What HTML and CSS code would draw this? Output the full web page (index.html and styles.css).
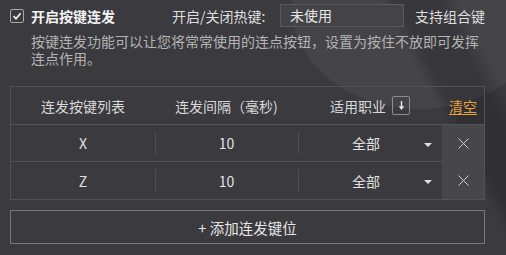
FILE: index.html
```html
<!DOCTYPE html>
<html lang="zh">
<head>
<meta charset="utf-8">
<link rel="stylesheet" href="styles.css">
</head>
<body>
<div class="page">
  <div class="toprow">
    <span class="check"><svg width="10" height="10" viewBox="0 0 10 10"><path d="M1.5 5.2 L4 7.6 L8.6 2.4" fill="none" stroke="#e6e6e6" stroke-width="1.8"/></svg></span>
    <span class="title">开启按键连发</span>
    <span class="hk-label">开启/关闭热键:</span>
    <span class="hk-input">未使用</span>
    <span class="combo">支持组合键</span>
  </div>
  <p class="desc">按键连发功能可以让您将常常使用的连点按钮，设置为按住不放即可发挥连点作用。</p>
  <div class="table">
    <div class="row head">
      <div class="cell">连发按键列表</div>
      <div class="cell">连发间隔（毫秒)</div>
      <div class="cell">适用职业<span class="sort"><svg width="7" height="11" viewBox="0 0 7 11"><path d="M3.5 1 V9" stroke="#e8e8e8" stroke-width="1.4"/><path d="M0.8 6.2 L3.5 10 L6.2 6.2 Z" fill="#e8e8e8"/></svg></span></div>
      <div class="cell act"><span class="clear">清空</span></div>
    </div>
    <div class="row">
      <div class="cell"><span class="val">X</span></div>
      <div class="cell div"><span class="val">10</span></div>
      <div class="cell div sel"><span class="val">全部</span><span class="caret"></span></div>
      <div class="cell del"><svg width="11" height="11" viewBox="0 0 11 11"><path d="M0.5 0.5 L10.5 10.5 M10.5 0.5 L0.5 10.5" stroke="#cfcfcf" stroke-width="1"/></svg></div>
    </div>
    <div class="row last">
      <div class="cell"><span class="val">Z</span></div>
      <div class="cell div"><span class="val">10</span></div>
      <div class="cell div sel"><span class="val">全部</span><span class="caret"></span></div>
      <div class="cell del"><svg width="11" height="11" viewBox="0 0 11 11"><path d="M0.5 0.5 L10.5 10.5 M10.5 0.5 L0.5 10.5" stroke="#cfcfcf" stroke-width="1"/></svg></div>
    </div>
  </div>
  <div class="addbtn">+ 添加连发键位</div>
</div>
</body>
</html>
```
FILE: styles.css
```css
html, body {
  margin: 0;
  padding: 0;
}
body {
  width: 506px;
  height: 255px;
  overflow: hidden;
  background-color: #3b3a3f;
  background-image:
    linear-gradient(62deg, transparent 0, transparent 455px, rgba(20,20,24,0.28) 470px, rgba(20,20,24,0.28) 505px, transparent 525px),
    radial-gradient(ellipse 130px 105px at 420px 5px, rgba(255,255,255,0.05) 0, rgba(255,255,255,0.05) 98%, transparent 100%);
  font-family: "Noto Sans CJK SC", "Microsoft YaHei", "Noto Sans", sans-serif;
  font-size: 14px;
  color: #dcdcdc;
}
.page {
  padding: 4px 21px 0 10px;
}
.toprow {
  display: flex;
  align-items: center;
  height: 23px;
}
.check {
  width: 12px;
  height: 12px;
  border: 1px solid #a8a8a8;
  border-radius: 2px;
  display: flex;
  align-items: center;
  justify-content: center;
  margin-right: 7px;
}
.title {
  font-weight: bold;
  color: #f2f2f2;
  width: 141px;
}
.hk-label {
  color: #dedede;
  width: 108px;
}
.hk-input {
  box-sizing: border-box;
  width: 124px;
  height: 23px;
  background: #444348;
  border: 1px solid #5a595e;
  padding-left: 9px;
  line-height: 21px;
  color: #e6e6e6;
}
.combo {
  margin-left: 11px;
  color: #dedede;
}
.desc {
  margin: 6px 0 0 21px;
  width: 452px;
  line-height: 17px;
  color: #b4b4b4;
}
.table {
  margin-top: 19px;
  width: 475px;
  box-sizing: border-box;
  border: 1px solid #535257;
}
.row {
  display: grid;
  grid-template-columns: 144px 143px 144px 42px;
  height: 37px;
}
.row.head {
  height: 37px;
  border-bottom: 1px solid #535257;
}
.row .cell {
  display: flex;
  align-items: center;
  justify-content: center;
  position: relative;
  color: #e2e2e2;
}
.row:not(.head):not(.last) .cell:not(.del) {
  border-bottom: 1px solid #535257;
}
.head .cell {
  color: #d8d8d8;
}
.sort {
  box-sizing: border-box;
  width: 18px;
  height: 19px;
  border: 1px solid #8e8d92;
  border-radius: 2px;
  margin-left: 6px;
  display: flex;
  align-items: center;
  justify-content: center;
}
.clear {
  color: #e9a23b;
  text-decoration: underline;
  text-underline-offset: 2px;
}
.div::before {
  content: "";
  position: absolute;
  left: 0;
  top: 7px;
  bottom: 7px;
  border-left: 1px solid #4f4e53;
}
.sel .val {
  margin-left: -8px;
}
.caret {
  position: absolute;
  right: 10px;
  top: 18px;
  width: 0;
  height: 0;
  border-left: 4px solid transparent;
  border-right: 4px solid transparent;
  border-top: 4px solid #e2e2e2;
}
.del {
  background: #47464b;
}
.addbtn {
  box-sizing: border-box;
  margin-top: 10px;
  width: 475px;
  height: 34px;
  border: 1px solid #78777c;
  display: flex;
  align-items: center;
  justify-content: center;
  color: #e6e6e6;
  font-size: 14.5px;
}
```
